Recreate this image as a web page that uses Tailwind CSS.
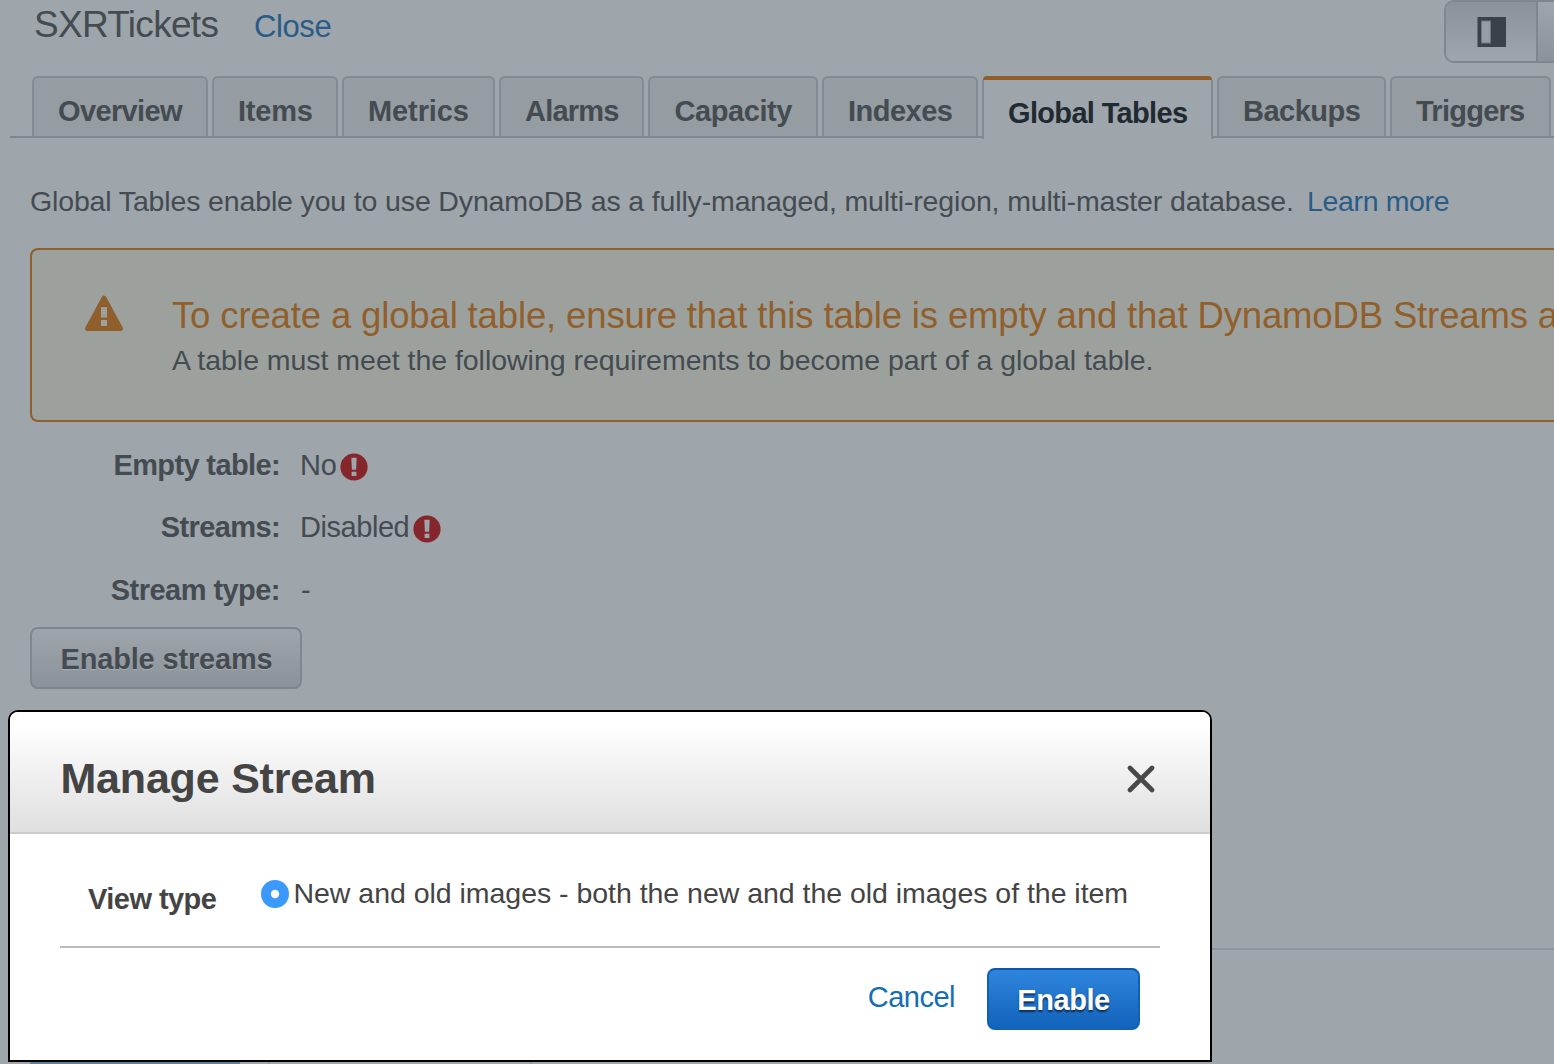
<!DOCTYPE html>
<html lang="en">
<head>
<meta charset="utf-8">
<title>DynamoDB - SXRTickets</title>
<script src="https://cdn.jsdelivr.net/npm/@tailwindcss/browser@4"></script>
</head>
<body class="relative h-[1064px] w-[1554px] overflow-hidden bg-[#9ea5ab] font-['Liberation_Sans',Arial,sans-serif] text-[29px] leading-[40px] text-[#444b51] whitespace-nowrap">

<div class="flex h-full flex-col">
  <header class="flex h-[76px] shrink-0 justify-between">
    <div class="flex items-baseline pt-[5px] pl-[34px]">
      <h1 class="w-[220px] text-[37px] tracking-[-0.7px]">SXRTickets</h1>
      <a class="text-[31px] tracking-[-0.4px] text-[#2a5c87]">Close</a>
    </div>
    <div class="flex h-[63px] w-[110px] shrink-0 overflow-hidden rounded-l-[10px] border-2 border-r-0 border-[#7f868d]">
      <button class="flex w-[92px] shrink-0 items-center justify-center border-r-2 border-[#7f868d] bg-linear-to-b from-[#8b9299] to-[#9ea5ab]">
        <svg class="ml-px h-[30px] w-[29px]" viewBox="0 0 29 30"><rect x="0.5" width="28.5" height="30" fill="#3a4149"/><rect x="4.5" y="4" width="9" height="22" fill="#969da4" stroke="#6f767d" stroke-width="1"/></svg>
      </button>
      <div class="flex-1 bg-linear-to-b from-[#9ea5ab] to-[#8b9299]"></div>
    </div>
  </header>

  <nav class="ml-[10px] flex h-[62px] shrink-0 gap-1 border-b-2 border-[#7f868e] pl-[22px] font-bold">
    <div class="w-[176px] shrink-0 rounded-t-md border-2 border-b-0 border-[#838a92] bg-[#959ca2] pt-[13px] pl-[24px] tracking-[-0.63px]">Overview</div>
    <div class="w-[126px] shrink-0 rounded-t-md border-2 border-b-0 border-[#838a92] bg-[#959ca2] pt-[13px] pl-[24px] tracking-[-0.2px]">Items</div>
    <div class="w-[153px] shrink-0 rounded-t-md border-2 border-b-0 border-[#838a92] bg-[#959ca2] pt-[13px] pl-[24px] tracking-[-0.1px]">Metrics</div>
    <div class="w-[145px] shrink-0 rounded-t-md border-2 border-b-0 border-[#838a92] bg-[#959ca2] pt-[13px] pl-[24px] tracking-[-0.8px]">Alarms</div>
    <div class="w-[170px] shrink-0 rounded-t-md border-2 border-b-0 border-[#838a92] bg-[#959ca2] pt-[13px] pl-[24.5px] tracking-[-0.42px]">Capacity</div>
    <div class="w-[156px] shrink-0 rounded-t-md border-2 border-b-0 border-[#838a92] bg-[#959ca2] pt-[13px] pl-[24px] tracking-[-0.5px]">Indexes</div>
    <div class="flex h-[63px] w-[231px] shrink-0 flex-col bg-[#9ea5ab] text-[#222a31]">
      <div class="mx-px h-1 shrink-0 rounded-t-md bg-[#905f2b]"></div>
      <div class="flex-1 border-x-2 border-[#838a92] pt-[13px] pl-[24px] tracking-[-0.66px]">Global Tables</div>
    </div>
    <div class="w-[169px] shrink-0 rounded-t-md border-2 border-b-0 border-[#838a92] bg-[#959ca2] pt-[13px] pl-[24px] tracking-[-0.5px]">Backups</div>
    <div class="w-[161px] shrink-0 rounded-t-md border-2 border-b-0 border-[#838a92] bg-[#959ca2] pt-[13px] pl-[24px] tracking-[-0.75px]">Triggers</div>
  </nav>

  <main class="flex flex-1 flex-col pl-[30px]">
    <p class="mt-[43px] flex text-[28.5px] tracking-[-0.145px]"><span class="w-[1277px]">Global Tables enable you to use DynamoDB as a fully-managed, multi-region, multi-master database.</span><a class="tracking-[-0.35px] text-[#2a5c87]">Learn more</a></p>

    <section class="mt-[27px] flex h-[174px] shrink-0 overflow-hidden rounded-l-lg border-2 border-r-0 border-[#905f2b] bg-[#9da19e]">
      <svg class="mt-[45px] ml-[52px] h-[37px] w-[40px] shrink-0" viewBox="0 0 40 37"><path d="M20 3.2 L36.5 33.6 H3.5 Z" fill="#905f2b" stroke="#905f2b" stroke-width="5" stroke-linejoin="round"/><path d="M17 12h6v10.5h-6zM17 25h6v6h-6z" fill="#9da19e"/></svg>
      <div class="mt-[46px] ml-12">
        <h2 class="text-[36.5px] tracking-[-0.14px] text-[#905f2b]">To create a global table, ensure that this table is empty and that DynamoDB Streams are disabled</h2>
        <p class="mt-1 text-[28.5px] tracking-[-0.03px]">A table must meet the following requirements to become part of a global table.</p>
      </div>
    </section>

    <dl class="mt-[23px] flex flex-col gap-[22px]">
      <div class="flex"><dt class="w-[250px] text-right font-bold tracking-[-0.62px]">Empty table:</dt><dd class="ml-5 flex tracking-[-0.1px]">No
        <svg class="mt-2 ml-[3px] size-7" viewBox="0 0 28 28"><circle cx="14" cy="14" r="13.6" fill="#85262c"/><path d="M11.3 4.8h5.4l-.6 12h-4.2zM11.6 18.7h4.8v4.3h-4.8z" fill="#9ea5ab"/></svg></dd></div>
      <div class="flex"><dt class="w-[250px] text-right font-bold tracking-[-0.6px]">Streams:</dt><dd class="ml-5 flex tracking-[-0.45px]">Disabled
        <svg class="mt-2 ml-[4px] size-7" viewBox="0 0 28 28"><circle cx="14" cy="14" r="13.6" fill="#85262c"/><path d="M11.3 4.8h5.4l-.6 12h-4.2zM11.6 18.7h4.8v4.3h-4.8z" fill="#9ea5ab"/></svg></dd></div>
      <div class="mt-px flex"><dt class="w-[250px] text-right font-bold tracking-[-0.54px]">Stream type:</dt><dd class="ml-[21px]">-</dd></div>
    </dl>

    <button class="mt-[17px] h-[62px] w-[272px] shrink-0 rounded-lg border-2 border-[#7f868d] bg-linear-to-b from-[#9ea5ab] to-[#8b9299] pt-[2px] pl-px font-bold tracking-[-0.17px] text-shadow-[0_1px_1px_#a8afb5]">Enable streams</button>

    <div class="mt-[259px] ml-[30px] h-[2px] shrink-0 bg-[#8f959c]"></div>
    <div class="mt-auto flex h-[2px] shrink-0">
      <div class="w-[210px] bg-[#61809c]"></div>
      <div class="ml-[28px] w-[264px] border-x-2 border-[#92989f]"></div>
    </div>
  </main>
</div>

<!-- Manage Stream dialog -->
<div class="absolute top-[710px] left-[8px] flex h-[352px] w-[1204px] flex-col overflow-hidden rounded-t-[10px] border-2 border-black bg-white text-[#444]">
  <div class="flex h-[122px] shrink-0 items-start justify-between border-b-2 border-[#ccc] bg-linear-to-b from-white from-10% to-[#dfdfdf] pr-[55px] pl-[50.5px]">
    <h2 class="mt-[41px] text-[43px] leading-[50px] font-bold tracking-[-0.2px]">Manage Stream</h2>
    <svg class="mt-[53px] size-7" viewBox="0 0 28 28"><path d="M3 3L25 25M25 3L3 25" stroke="#484848" stroke-width="4.6" stroke-linecap="round"/></svg>
  </div>
  <div class="mx-[50px] flex h-[114px] shrink-0 border-b-2 border-[#bbb]">
    <div class="mt-[45px] ml-[28px] w-[173px] font-bold tracking-[-0.54px]">View type</div>
    <svg class="mt-[46px] size-7" viewBox="0 0 28 28"><circle cx="14" cy="14" r="14" fill="#3b99fc"/><circle cx="14" cy="14" r="4.2" fill="#fff"/></svg>
    <div class="mt-[39px] ml-[4.5px] text-[28.5px] tracking-[-0.03px]">New and old images - both the new and the old images of the item</div>
  </div>
  <div class="flex justify-end pt-5 pr-[70px]">
    <a class="mt-[9px] mr-8 tracking-[-0.5px] text-[#146eb4]">Cancel</a>
    <button class="h-[62px] w-[153px] rounded-lg border-2 border-t-[#0a57ad] border-r-[#1260b5] border-b-[#1262b6] border-l-[#1260b5] bg-linear-to-b from-[#2f85dd] to-[#1163bb] pt-px font-bold tracking-[-0.45px] text-white text-shadow-[0_2px_2px_rgb(0_0_0/0.6)]">Enable</button>
  </div>
</div>
</body>
</html>
